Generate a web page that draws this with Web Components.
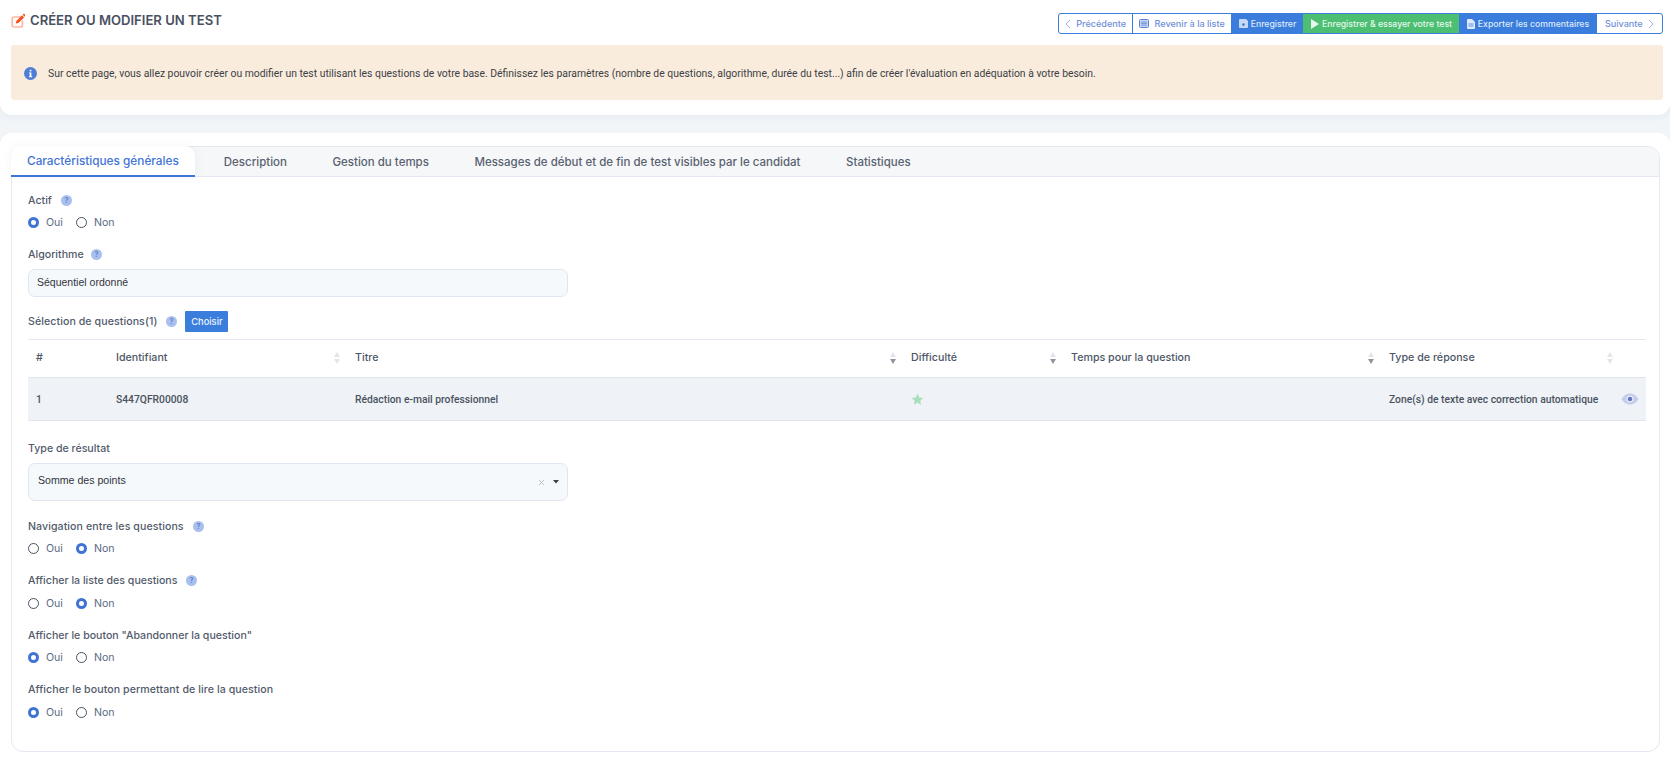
<!DOCTYPE html>
<html lang="fr">
<head>
<meta charset="utf-8">
<title>Créer ou modifier un test</title>
<style>
  html, body { margin: 0; padding: 0; }
  body { background: #f1f5f8; font-family: Inter, "Noto Sans", sans-serif; color: #4a5161; overflow: hidden; }
</style>
</head>
<body>
<top-panel>
  <button-bar slot="actions"></button-bar>
  <info-alert>Sur cette page, vous allez pouvoir créer ou modifier un test utilisant les questions de votre base. Définissez les paramètres (nombre de questions, algorithme, durée du test...) afin de créer l'évaluation en adéquation à votre besoin.</info-alert>
</top-panel>
<main-panel>
  <tab-card>
    <radio-field label="Actif" help value="oui"></radio-field>
    <text-field label="Algorithme" help>Séquentiel ordonné</text-field>
    <question-table></question-table>
    <select-field label="Type de résultat">Somme des points</select-field>
    <radio-field label="Navigation entre les questions" help value="non" ls=".08"></radio-field>
    <radio-field label="Afficher la liste des questions" help value="non" ls="0"></radio-field>
    <radio-field label="Afficher le bouton &quot;Abandonner la question&quot;" value="oui" ls="0"></radio-field>
    <radio-field label="Afficher le bouton permettant de lire la question" value="oui" ls=".08"></radio-field>
  </tab-card>
</main-panel>

<script>
// petit utilitaire : chaque element a son shadow root ouvert
function makeEl(name, render) {
  customElements.define(name, class extends HTMLElement {
    constructor() {
      super();
      this.attachShadow({ mode: "open" });
    }
    connectedCallback() {
      this.shadowRoot.innerHTML = render(this);
    }
  });
}

const HELP = `<svg width="11" height="11" viewBox="0 0 11 11" style="flex:none"><circle cx="5.5" cy="5.5" r="5.5" fill="#a9bfee"/><text x="5.5" y="7.9" text-anchor="middle" font-size="7" font-weight="700" font-family="Inter" fill="#5f82c9">?</text></svg>`;

makeEl("help-label", el => `
  <style>
    :host { display: flex; align-items: center; height: 18px; font-size: 10.6px; font-weight: 500; color: #525b6b; white-space: nowrap; letter-spacing: ${el.getAttribute("ls") || 0}px; }
    svg { margin-left: var(--help-gap, 9px); }
  </style>
  <span>${el.getAttribute("text")}</span>${el.hasAttribute("help") ? HELP : ""}
`);

makeEl("top-panel", () => `
  <style>
    :host { display: block; background: #fff; height: 115px; box-sizing: border-box; padding: 13px 7px 0 11px; border-radius: 0 0 12px 12px; box-shadow: 0 2px 6px rgba(180,195,210,.18); }
    .row { display: flex; justify-content: space-between; height: 21px; margin-bottom: 11px; }
    h1 { display: flex; align-items: center; gap: 5px; margin: -6px 0 0; font-size: 13.1px; line-height: 21px; font-weight: 600; color: #4a5161; }
  </style>
  <div class="row">
    <h1>
      <svg width="14" height="15" viewBox="0 0 14 15">
        <path d="M9.5 4H3a1.8 1.8 0 0 0-1.8 1.8v6.4A1.8 1.8 0 0 0 3 14h6.6a1.8 1.8 0 0 0 1.8-1.8V7.5" fill="none" stroke="#ffb8a0" stroke-width="1.7"/>
        <path d="M4.8 10.6l.5-2.6L11 2.3l2.1 2.1-5.7 5.7z" fill="#f4511e"/>
        <path d="M11.6 1.7l.8-.8a.7.7 0 0 1 1 0l1 1a.7.7 0 0 1 0 1l-.8.8z" fill="#f4511e"/>
      </svg>
      CRÉER OU MODIFIER UN TEST
    </h1>
    <slot name="actions"></slot>
  </div>
  <slot></slot>
`);

makeEl("button-bar", () => `
  <style>
    :host { display: flex; height: 21px; box-sizing: border-box; border: 1px solid #3b7ddd; border-radius: 3px; overflow: hidden; font-size: 9.1px; font-weight: 500; background: #fff; }
    a { display: flex; align-items: center; justify-content: center; gap: 3px; box-sizing: border-box; color: #6f8fd8; white-space: nowrap; }
    a + a { border-left: 1px solid #3b7ddd; }
    .blue { background: #3b7ddd; color: #dfe9fb; font-size: 8.7px; }
    .green { background: #4cbf73; color: #e7f8ec; border-left-color: #4cbf73; font-size: 8.7px; }
    .plain { border-left: 0; }
  </style>
  <a style="width:73px"><svg width="6" height="10" viewBox="0 0 6 10"><path d="M5 1L1 5l4 4" fill="none" stroke="#9db5e8" stroke-width="1"/></svg>&nbsp;Précédente</a>
  <a style="width:99px"><svg width="10" height="9" viewBox="0 0 10 9"><rect x=".5" y=".5" width="9" height="8" rx="1" fill="#c9d8f5" stroke="#5d84d6"/><path d="M2 3h6M2 4.6h6M2 6.2h6" stroke="#5d84d6" stroke-width=".8"/></svg>&nbsp;Revenir à la liste</a>
  <a class="blue" style="width:72px"><svg width="9" height="9" viewBox="0 0 9 9"><path d="M1 0h6l2 2v6a1 1 0 0 1-1 1H1a1 1 0 0 1-1-1V1a1 1 0 0 1 1-1z" fill="#c7d8f6"/><circle cx="4.5" cy="5.6" r="1.3" fill="#3b7ddd"/></svg>Enregistrer</a>
  <a class="green" style="width:156px"><svg width="8" height="10" viewBox="0 0 8 10"><path d="M0 0l8 5-8 5z" fill="#e7f8ec"/></svg>Enregistrer &amp; essayer votre test</a>
  <a class="blue plain" style="width:138px"><svg width="8" height="10" viewBox="0 0 8 10"><path d="M0 1a1 1 0 0 1 1-1h4l3 3v6a1 1 0 0 1-1 1H1a1 1 0 0 1-1-1z" fill="#dfe9fb"/><path d="M1.5 5h5M1.5 7h5" stroke="#3b7ddd" stroke-width=".8"/></svg>Exporter les commentaires</a>
  <a class="plain" style="width:65px">Suivante&nbsp;<svg width="6" height="10" viewBox="0 0 6 10"><path d="M1 1l4 4-4 4" fill="none" stroke="#9db5e8" stroke-width="1"/></svg></a>
`);

makeEl("info-alert", () => `
  <style>
    :host { display: flex; align-items: center; gap: 11px; height: 55px; box-sizing: border-box; padding: 2px 0 0 13px; background: #f9ecdc; border-radius: 3px; font-family: Roboto, sans-serif; font-size: 10.38px; color: #3c3f46; white-space: nowrap; }
  </style>
  <svg width="13" height="13" viewBox="0 0 13 13" style="flex:none"><circle cx="6.5" cy="6.5" r="6.5" fill="#4f7ed6"/><rect x="5.7" y="2.8" width="1.7" height="1.6" fill="#fff"/><path d="M4.9 5.6h2.5v3.6h.8v1H4.9v-1h.8V6.6h-.8z" fill="#fff"/></svg>
  <span><slot></slot></span>
`);

makeEl("main-panel", () => `
  <style>
    :host { display: block; margin-top: 18px; background: #fff; padding: 13px 10px 0 11px; height: 637px; box-sizing: border-box; border-radius: 12px 12px 0 0; }
  </style>
  <slot></slot>
`);

makeEl("tab-card", () => `
  <style>
    :host { display: block; border: 1px solid #e4e8f1; border-radius: 12px; box-sizing: border-box; height: 606px; }
    nav { display: flex; height: 29px; background: #f5f7f9; border-bottom: 1px solid #e4e8f1; border-radius: 12px 12px 0 0; font-size: 11.5px; font-weight: 500; color: #5a6270; }
    nav a { display: flex; align-items: center; padding: 0 16px; margin-right: 13.5px; white-space: nowrap; }
    nav a.on { background: #fff; color: #3f74d4; font-size: 11.8px; margin: -1px 13px -1px -1px; border-bottom: 2px solid #3f74d4; border-radius: 10px 10px 0 0; box-shadow: 0 0 10px rgba(160,180,210,.14); height: 31px; box-sizing: border-box; }
    .body { padding: 14px 13px 0 16px; }
  </style>
  <nav>
    <a class="on">Caractéristiques générales</a>
    <a>Description</a>
    <a>Gestion du temps</a>
    <a>Messages de début et de fin de test visibles par le candidat</a>
    <a>Statistiques</a>
  </nav>
  <div class="body"><slot></slot></div>
`);

makeEl("radio-field", el => {
  const val = el.getAttribute("value");
  const label = el.getAttribute("label").replace(/"/g, "&quot;");
  const radio = (txt, on) => `<span class="opt"><i class="${on ? "on" : ""}"></i>${txt}</span>`;
  return `
  <style>
    :host { display: block; height: 41px; margin-bottom: 13.4px; }
    .opts { display: flex; margin-top: 4.5px; height: 18px; align-items: center; gap: 13px; font-size: 10.6px; color: #5b6b84; }
    .opt { display: flex; align-items: center; gap: 7px; }
    i { display: block; width: 11px; height: 11px; box-sizing: border-box; border: 1px solid #4a5161; border-radius: 50%; background: #fff; }
    i.on { border: 3.2px solid #3f74d4; }
  </style>
  <help-label text="${label}" ${el.hasAttribute("help") ? "help" : ""} ls="${el.getAttribute("ls") || 0}"></help-label>
  <div class="opts">${radio("Oui", val === "oui")}${radio("Non", val === "non")}</div>`;
});

makeEl("text-field", el => `
  <style>
    :host { display: block; }
    .box { display: flex; align-items: center; width: 540px; height: 28px; box-sizing: border-box; margin-top: 6px; padding-left: 8px; padding-bottom: 2px; background: #f6f9fc; border: 1px solid #e0e6ee; border-radius: 7px; font-family: "Liberation Sans", sans-serif; font-size: 10.5px; color: #30343b; }
  </style>
  <help-label text="${el.getAttribute("label")}" ${el.hasAttribute("help") ? "help" : ""} style="--help-gap:7px"></help-label>
  <div class="box"><slot></slot></div>
`);

makeEl("select-field", el => `
  <style>
    :host { display: block; margin-top: 18.5px; margin-bottom: 16px; }
    .box { display: flex; align-items: center; width: 540px; height: 38px; box-sizing: border-box; margin-top: 5.5px; padding: 0 8px 0 9px; background: #f6f9fc; border: 1px solid #e0e6ee; border-radius: 7px; font-family: "Liberation Sans", sans-serif; font-size: 10.6px; color: #30343b; }
    .txt { flex: 1; padding-bottom: 4px; }
    svg { margin-left: 8px; }
  </style>
  <help-label text="${el.getAttribute("label")}"></help-label>
  <div class="box"><span class="txt"><slot></slot></span>
    <svg width="7" height="7" viewBox="0 0 7 7"><path d="M.8.8l5.4 5.4M6.2.8L.8 6.2" stroke="#b4b8bf" stroke-width=".9"/></svg>
    <svg width="6" height="4" viewBox="0 0 6 4"><path d="M0 0h6L3 3.6z" fill="#3a3f48"/></svg>
  </div>
`);

const SORT = (down = "#e3e5ea") => `<svg class="sort" width="6" height="12" viewBox="0 0 6 12"><path d="M3 0l3 5H0z" fill="#e3e5ea"/><path d="M0 7h6l-3 5z" fill="${down}"/></svg>`;

makeEl("question-table", () => `
  <style>
    :host { display: block; margin-top: 14px; }
    .head { display: flex; align-items: center; gap: 8px; height: 21px; }
    .head a { display: flex; align-items: center; justify-content: center; width: 43px; height: 21px; background: #3b7ddd; color: #eaf1fd; font-size: 9.3px; font-weight: 500; border-radius: 1px; }
    table { width: 100%; margin-top: 7px; border-collapse: collapse; table-layout: fixed; }
    th, td { padding: 0 0 0 8px; text-align: left; white-space: nowrap; position: relative; }
    th { height: 38px; font-size: 10.7px; font-weight: 500; color: #4d5666; border-top: 1px solid #e4e6f0; border-bottom: 1px solid #e1e5ec; padding-bottom: 3px; box-sizing: border-box; }
    td { height: 42px; font-family: Roboto, sans-serif; font-size: 10.3px; font-weight: 500; color: #4b5260; background: #eff2f7; border-bottom: 1px solid #e1e5ec; }
    .sort { position: absolute; right: 7px; top: 12px; }
    .eye { display: block; margin-left: 1px; }
    .star { display: block; }
  </style>
  <div class="head">
    <help-label text="Sélection de questions(1)" help ls=".08"></help-label>
    <a>Choisir</a>
  </div>
  <table>
    <colgroup><col style="width:80px"><col style="width:239px"><col style="width:556px"><col style="width:160px"><col style="width:318px"><col style="width:239px"><col></colgroup>
    <tr>
      <th>#</th><th>Identifiant${SORT()}</th><th>Titre${SORT("#8f949e")}</th><th>Difficulté${SORT("#8f949e")}</th><th>Temps pour la question${SORT("#8f949e")}</th><th>Type de réponse${SORT()}</th><th></th>
    </tr>
    <tr>
      <td>1</td><td>S447QFR00008</td><td>Rédaction e-mail professionnel</td>
      <td><svg class="star" width="13" height="13" viewBox="0 0 24 24"><path d="M12 1.5l3.2 6.9 7.5.9-5.6 5.1 1.5 7.4L12 18.1l-6.6 3.7 1.5-7.4-5.6-5.1 7.5-.9z" fill="#a8dfbc"/></svg></td>
      <td></td><td>Zone(s) de texte avec correction automatique</td>
      <td style="padding-left:0"><svg class="eye" width="18" height="12" viewBox="0 0 18 12"><path d="M9 .5C5 .5 2 3 .5 6 2 9 5 11.5 9 11.5S16 9 17.5 6C16 3 13 .5 9 .5z" fill="#c5cdec"/><circle cx="9" cy="6" r="3.3" fill="#eff2f7"/><circle cx="9" cy="6" r="2.3" fill="#5f77c4"/></svg></td>
    </tr>
  </table>
`);
</script>
</body>
</html>
